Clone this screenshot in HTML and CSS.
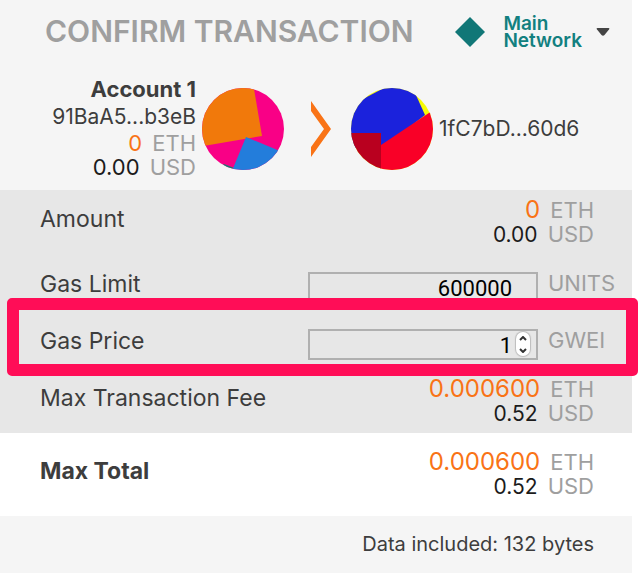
FILE: index.html
```
<!DOCTYPE html>
<html lang="en">
<head>
    <meta charset="UTF-8">
    <meta name="viewport" content="width=device-width, initial-scale=1.0">
    <title>Confirm Transaction</title>
    <link rel="stylesheet" href="styles.css">
</head>
<body>
    <main class="panel">
        <header class="top">
            <h1>CONFIRM TRANSACTION</h1>
            <button class="network" type="button">
                <svg class="diamond" width="30" height="30" viewBox="0 0 30 30"><path d="M15 0L30 15L15 30L0 15Z" fill="#117777"/></svg>
                <span class="network-name">Main<br>Network</span>
                <svg class="caret" width="14" height="8" viewBox="0 0 14 8"><path d="M1.5 0H12.5Q14 0 13 1.500L8.500 7Q7 8.500 5.500 7L1 1.500Q0 0 1.500 0Z" fill="#444"/></svg>
            </button>
        </header>

        <section class="accounts">
            <div class="account">
                <strong>Account 1</strong>
                <span class="address">91BaA5...b3eB</span>
                <span class="line small"><span class="eth">0</span><span class="unit">ETH</span></span>
                <span class="line small"><span class="usd">0.00</span><span class="unit">USD</span></span>
            </div>
            <svg class="identicon" width="82" height="82" viewBox="0 0 82 82">
                <clipPath id="from"><circle cx="41" cy="41" r="41"/></clipPath>
                <g clip-path="url(#from)">
                    <rect width="82" height="82" fill="#f90086"/>
                    <path d="M-5 59L60 48L51 -5H-5Z" fill="#f1790b"/>
                    <path d="M44 49L90 68V90H27Z" fill="#237ddb"/>
                    <path d="M22 76L31 79.500L29 86L15 82Z" fill="#167b72"/>
                </g>
            </svg>
            <svg class="arrow" width="20" height="56" viewBox="0 0 20 56"><path d="M0 0L20 28L0 56V46L13 28L0 10Z" fill="#f97316"/></svg>
            <svg class="identicon" width="82" height="82" viewBox="0 0 82 82">
                <clipPath id="to"><circle cx="41" cy="41" r="41"/></clipPath>
                <g clip-path="url(#to)">
                    <rect width="82" height="82" fill="#f7fb05"/>
                    <path d="M-5 20L33 0L60 -4L74 27L32 60H-5Z" fill="#1b22dc"/>
                    <path d="M30 57L90 17V90H28Z" fill="#f90027"/>
                    <path d="M-5 45H30V90H-5Z" fill="#b9001f"/>
                </g>
            </svg>
            <span class="address recipient">1fC7bD...60d6</span>
        </section>

        <form class="details">
            <div class="row amount">
                <span class="label">Amount</span>
                <div class="value">
                    <span class="line"><span class="eth">0</span><span class="unit">ETH</span></span>
                    <span class="line"><span class="usd">0.00</span><span class="unit">USD</span></span>
                </div>
            </div>
            <div class="row field-row">
                <label class="label" for="gas-limit">Gas Limit</label>
                <div class="field"><input id="gas-limit" type="number" value="600000"></div>
                <span class="unit">UNITS</span>
            </div>
            <div class="row field-row highlight">
                <label class="label" for="gas-price">Gas Price</label>
                <div class="field">
                    <input id="gas-price" type="number" value="1">
                    <div class="stepper">
                        <button type="button" aria-label="Increase"><svg width="8" height="5" viewBox="0 0 8 5"><path d="M1 4L4 1L7 4"/></svg></button>
                        <button type="button" aria-label="Decrease"><svg width="8" height="5" viewBox="0 0 8 5"><path d="M1 1L4 4L7 1"/></svg></button>
                    </div>
                </div>
                <span class="unit">GWEI</span>
            </div>
            <div class="row">
                <span class="label">Max Transaction Fee</span>
                <div class="value">
                    <span class="line"><span class="eth">0.000600</span><span class="unit">ETH</span></span>
                    <span class="line"><span class="usd">0.52</span><span class="unit">USD</span></span>
                </div>
            </div>
        </form>

        <section class="row total">
            <strong class="label">Max Total</strong>
            <div class="value">
                <span class="line"><span class="eth">0.000600</span><span class="unit">ETH</span></span>
                <span class="line"><span class="usd">0.52</span><span class="unit">USD</span></span>
            </div>
        </section>

        <footer class="data">Data included: 132 bytes</footer>
    </main>
</body>
</html>
```

FILE: styles.css
```
* {
    box-sizing: border-box;
}

body {
    margin: 0;
    padding-right: 7px;
    background: #fff;
    color: #3d3d3d;
    font-family: Inter, 'Liberation Sans', sans-serif;
    font-size: 22px;
}

.panel {
    display: flex;
    flex-direction: column;
    min-height: 100vh;
    background: #f5f5f5;
}

.top {
    display: flex;
    justify-content: space-between;
    align-items: center;
    height: 64px;
    padding: 0 22px 0 45px;
}

h1 {
    margin: 0;
    color: #9f9f9f;
    font-size: 30px;
    font-weight: 600;
    line-height: 36px;
    padding-bottom: 2px;
    white-space: nowrap;
}

.network {
    display: flex;
    align-items: center;
    padding: 0;
    border: none;
    background: none;
    color: #128080;
    font: inherit;
    cursor: pointer;
}

.network-name {
    margin: 0 14px 0 18px;
    font-size: 19px;
    font-weight: 600;
    line-height: 17px;
    text-align: left;
}

.accounts {
    display: flex;
    align-items: center;
    height: 126px;
    padding-top: 4px;
    padding-left: 40px;
}

.account {
    display: flex;
    flex-direction: column;
    align-items: flex-end;
    width: 156px;
    margin-bottom: 4px;
    line-height: 24px;
}

.account strong {
    line-height: 28px;
}

.address {
    font-size: 21px;
    line-height: 28px;
}

.identicon {
    margin-left: 6px;
}

.arrow {
    margin: 0 14px 0 27px;
}

.recipient {
    margin-left: 6px;
}

.details {
    padding: 4px 0 3px;
    background: #e7e7e7;
}

.row {
    display: flex;
    justify-content: space-between;
    align-items: center;
    min-height: 57px;
    padding: 0 38px 0 40px;
}

.amount {
    margin-bottom: 8px;
}

.label {
    padding-bottom: 8px;
    font-size: 23px;
    white-space: nowrap;
}

.line {
    display: flex;
    justify-content: flex-end;
    align-items: baseline;
    gap: 10px;
    line-height: 24px;
}

.eth {
    color: #f97316;
    font-size: 24px;
}

.small .eth {
    font-size: 22px;
}

.usd {
    color: #1b1b1b;
}

.value .usd {
    font-size: 21px;
}

.unit {
    color: #9f9f9f;
}

.field-row {
    position: relative;
    padding-right: 20px;
}

.field-row .label {
    flex: 1;
}

.field-row .unit {
    width: 64px;
    margin-left: 10px;
    padding-bottom: 10px;
}

.field {
    position: relative;
    width: 230px;
}

.field input {
    display: block;
    width: 100%;
    height: 31px;
    padding: 2px 24px 0 4px;
    border: 2px solid #b0b0b0;
    background: transparent;
    color: #000;
    font: 22px Roboto, sans-serif;
    text-align: right;
    appearance: textfield;
}

.field input::-webkit-inner-spin-button {
    display: none;
}

.stepper {
    position: absolute;
    top: 3px;
    right: 8px;
    display: flex;
    flex-direction: column;
    width: 14px;
    height: 24px;
    border-radius: 7px;
    background: #fff;
    box-shadow: 0 0 1px 1px #bcbcbc;
}

.stepper button {
    display: flex;
    flex: 1;
    align-items: center;
    justify-content: center;
    padding: 0;
    border: none;
    background: none;
}

.stepper path {
    fill: none;
    stroke: #333;
    stroke-width: 2;
}

/* callout frame around the gas price */
.highlight::after {
    content: '';
    position: absolute;
    top: -18px;
    bottom: -3px;
    left: 7px;
    right: -6px;
    border: 12px solid #ff0d57;
    border-radius: 5px;
    pointer-events: none;
}

.total {
    height: 83px;
    background: #fff;
}

.data {
    padding: 16px 38px;
    font-size: 20px;
    line-height: 25px;
    text-align: right;
}
```
